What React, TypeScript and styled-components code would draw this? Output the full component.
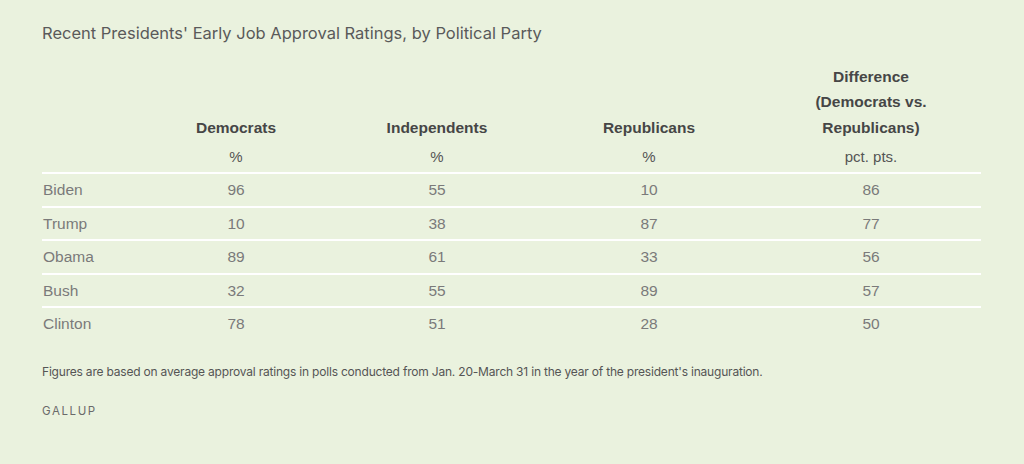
import React from 'react'
import styled, { createGlobalStyle } from 'styled-components'

const GlobalStyle = createGlobalStyle`
  html, body {
    margin: 0;
    padding: 0;
    background: #eaf2de;
  }
`

const Page = styled.div`
  width: 1024px;
  height: 464px;
  box-sizing: border-box;
  padding: 22px 43px 0 42px;
  background: #eaf2de;
  font-family: 'Liberation Sans', Arial, sans-serif;
`

const Title = styled.h1`
  margin: 0;
  font-family: Inter, 'Noto Sans', sans-serif;
  font-weight: 400;
  font-size: 16.5px;
  line-height: 22px;
  color: #5a5a5a;
`

const Grid = styled.div`
  display: grid;
  grid-template-columns: 93px 202px 200px 224px 220px;
  margin-top: 18px;
`

const HeadCell = styled.div`
  display: flex;
  align-items: flex-end;
  justify-content: center;
  text-align: center;
  height: 78px;
  font-weight: 700;
  font-size: 15.5px;
  line-height: 25.5px;
  color: #464646;
`

const UnitCell = styled.div`
  box-sizing: border-box;
  text-align: center;
  height: 32px;
  padding-top: 3px;
  font-size: 15px;
  line-height: 28px;
  color: #555;
`

const Cell = styled.div<{ $first?: boolean }>`
  box-sizing: border-box;
  border-top: 2px solid #ffffff;
  height: 33.5px;
  padding-top: 1px;
  display: flex;
  align-items: center;
  justify-content: ${p => (p.$first ? 'flex-start' : 'center')};
  padding-left: ${p => (p.$first ? '1px' : '0')};
  font-size: 15.5px;
  color: #7a7a7a;
`

const Note = styled.p`
  margin: 24px 0 0;
  font-family: Inter, 'Noto Sans', sans-serif;
  font-size: 12px;
  letter-spacing: -0.2px;
  color: #555;
`

const Source = styled.div`
  margin-top: 25px;
  font-family: Inter, 'Noto Sans', sans-serif;
  font-size: 11.5px;
  letter-spacing: 1.6px;
  color: #6a6a6a;
`

const units = ['', '%', '%', '%', 'pct. pts.']

const rows: [string, number, number, number, number][] = [
  ['Biden', 96, 55, 10, 86],
  ['Trump', 10, 38, 87, 77],
  ['Obama', 89, 61, 33, 56],
  ['Bush', 32, 55, 89, 57],
  ['Clinton', 78, 51, 28, 50],
]

export default function App() {
  return (
    <Page>
      <GlobalStyle />
      <Title>Recent Presidents' Early Job Approval Ratings, by Political Party</Title>
      <Grid>
        <HeadCell />
        <HeadCell>Democrats</HeadCell>
        <HeadCell>Independents</HeadCell>
        <HeadCell>Republicans</HeadCell>
        <HeadCell>
          Difference
          <br />
          (Democrats vs.
          <br />
          Republicans)
        </HeadCell>
        {units.map((u, i) => (
          <UnitCell key={'u' + i}>{u}</UnitCell>
        ))}
        {rows.map(r =>
          r.map((v, i) => (
            <Cell key={r[0] + i} $first={i === 0}>
              {v}
            </Cell>
          ))
        )}
      </Grid>
      <Note>
        Figures are based on average approval ratings in polls conducted from Jan. 20-March 31 in the year of the
        president's inauguration.
      </Note>
      <Source>GALLUP</Source>
    </Page>
  )
}
